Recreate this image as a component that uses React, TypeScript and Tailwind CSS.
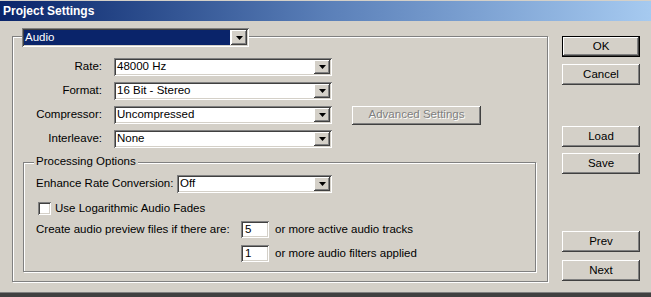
import React from 'react'

const sunken =
    'shadow-[inset_1px_1px_#808080,inset_-1px_-1px_#ffffff,inset_2px_2px_#404040,inset_-2px_-2px_#d4d0c8]'
const raised =
    'shadow-[inset_-1px_-1px_#404040,inset_1px_1px_#ffffff,inset_-2px_-2px_#808080,inset_2px_2px_#d4d0c8]'
const etched = 'border border-[#808080] shadow-[1px_1px_0_#ffffff,inset_1px_1px_0_#ffffff]'

const Arrow = () => (
    <div className={`w-[16px] h-full bg-[#d4d0c8] flex items-center justify-center ${raised}`}>
        <svg width="7" height="4" viewBox="0 0 7 4">
            <polygon points="0,0 7,0 3.5,4" fill="#000" />
        </svg>
    </div>
)

const Select = ({ value, className = '', selected = false }: { value: string; className?: string; selected?: boolean }) => (
    <div className={`flex p-[2px] bg-white ${sunken} ${className}`}>
        <div
            className={`flex-1 flex items-center pl-[1px] leading-none ${
                selected ? 'bg-[#0a246a] text-white mr-[1px]' : ''
            }`}
        >
            {value}
        </div>
        <Arrow />
    </div>
)

const Button = ({ label, className = '', isDefault = false }: { label: string; className?: string; isDefault?: boolean }) =>
    isDefault ? (
        <div className={`w-[78px] h-[21px] border border-black flex ${className}`}>
            <div className={`flex-1 flex items-center justify-center bg-[#d4d0c8] ${raised}`}>{label}</div>
        </div>
    ) : (
        <div className={`w-[78px] h-[21px] flex items-center justify-center bg-[#d4d0c8] ${raised} ${className}`}>
            {label}
        </div>
    )

const TextBox = ({ value }: { value: string }) => (
    <div className={`w-[28px] h-[17px] bg-white flex items-center pl-[4px] ${sunken}`}>{value}</div>
)

const Row = ({ label, value, children }: { label: string; value: string; children?: React.ReactNode }) => (
    <div className="h-[18px] flex items-center">
        <div className="w-[89px] text-right">{label}</div>
        <Select value={value} className="ml-[12px] w-[218px] h-[18px]" />
        {children}
    </div>
)

export default function App() {
    return (
        <div className="w-[651px] h-[297px] overflow-hidden flex flex-col bg-[#d4d0c8] text-black text-[11.5px] font-['Liberation_Sans',Arial,sans-serif]">
            {/* Title bar */}
            <div className="h-[1px] bg-[#d4d0c8]" />
            <div className="h-[20px] flex items-center pl-[3px] bg-gradient-to-r from-[#0a246a] via-[#5a7fb8] to-[#a6caf0] text-white font-bold text-[12px]">
                Project Settings
            </div>

            {/* Body */}
            <div className="h-[271px] flex pl-[12px] pt-[15px]">
                <div className={`w-[536px] h-[246px] ${etched} flex flex-col`}>
                    <Select value="Audio" selected className="-mt-[9px] ml-[9px] w-[227px] h-[19px]" />

                    <div className="mt-[11px] flex flex-col gap-[6px]">
                        <Row label="Rate:" value="48000 Hz" />
                        <Row label="Format:" value="16 Bit - Stereo" />
                        <Row label="Compressor:" value="Uncompressed">
                            <div
                                className={`ml-[20px] w-[129px] h-[19px] flex items-center justify-center bg-[#d4d0c8] text-[#808080] [text-shadow:1px_1px_0_#ffffff] ${raised}`}
                            >
                                Advanced Settings
                            </div>
                        </Row>
                        <Row label="Interleave:" value="None" />
                    </div>

                    {/* Processing Options */}
                    <div className={`mt-[14px] ml-[10px] w-[513px] h-[110px] ${etched} flex flex-col`}>
                        <div className="-mt-[8px] h-[14px] ml-[10px] self-start px-[2px] bg-[#d4d0c8] flex items-center">
                            Processing Options
                        </div>
                        <div className="mt-[6px] h-[18px] flex items-center pl-[12px]">
                            <div className="w-[141px]">Enhance Rate Conversion:</div>
                            <Select value="Off" className="w-[155px] h-[18px]" />
                        </div>
                        <div className="mt-[9px] h-[13px] flex items-center pl-[14px]">
                            <div className={`w-[13px] h-[13px] bg-white ${sunken}`} />
                            <div className="ml-[4px]">Use Logarithmic Audio Fades</div>
                        </div>
                        <div className="mt-[6px] h-[17px] flex items-center pl-[12px]">
                            <div className="w-[205px]">Create audio preview files if there are:</div>
                            <TextBox value="5" />
                            <div className="ml-[6px]">or more active audio tracks</div>
                        </div>
                        <div className="mt-[7px] h-[17px] flex items-center pl-[217px]">
                            <TextBox value="1" />
                            <div className="ml-[6px]">or more audio filters applied</div>
                        </div>
                    </div>
                </div>

                {/* Buttons */}
                <div className="ml-[14px] flex flex-col">
                    <Button label="OK" isDefault />
                    <Button label="Cancel" className="mt-[7px]" />
                    <Button label="Load" className="mt-[41px]" />
                    <Button label="Save" className="mt-[6px]" />
                    <Button label="Prev" className="mt-[57px]" />
                    <Button label="Next" className="mt-[8px]" />
                </div>
            </div>

            <div className="h-[1px] bg-[#808080]" />
            <div className="flex-1 bg-[#404040]" />
        </div>
    )
}
